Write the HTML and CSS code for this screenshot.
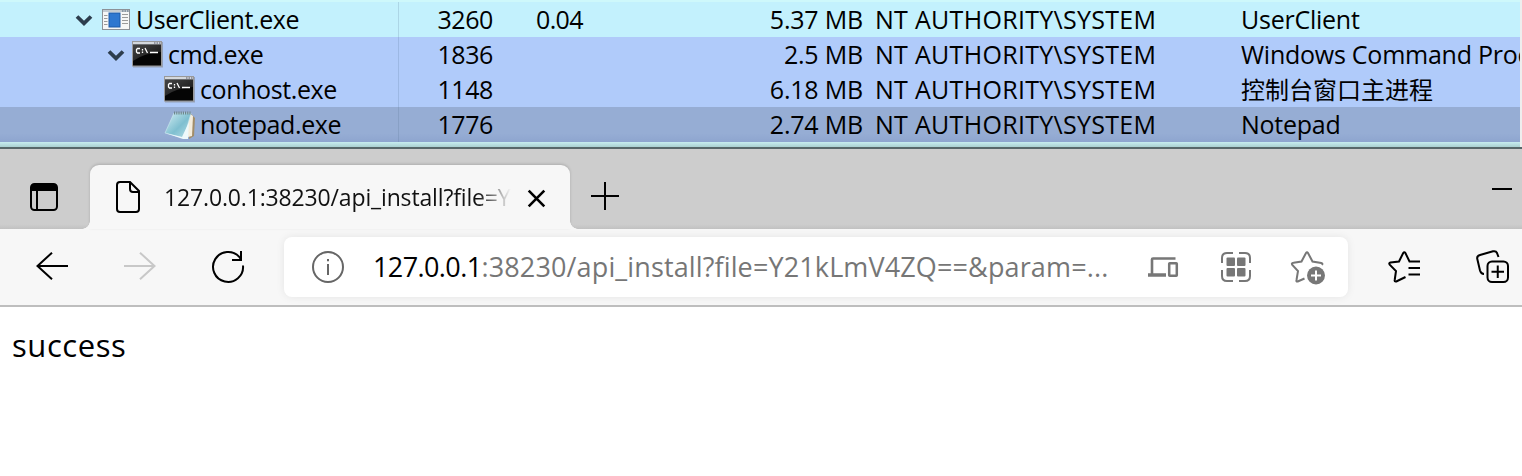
FILE: index.html
```
<!DOCTYPE html>
<html lang="zh-CN">
<head>
<meta charset="utf-8">
<title>127.0.0.1:38230/api_install</title>
<link rel="stylesheet" href="styles.css">
</head>
<body>
<svg class="defs" width="0" height="0" aria-hidden="true">
  <defs>
    <linearGradient id="gloss" x1="0" y1="0" x2="1" y2="1"><stop offset="0" stop-color="#444"/><stop offset="1" stop-color="#111"/></linearGradient>
    <linearGradient id="page" x1="0" y1="0" x2="1" y2="1"><stop offset="0" stop-color="#d3eef2"/><stop offset=".55" stop-color="#7fbfd0"/><stop offset="1" stop-color="#b9e0e8"/></linearGradient>
    <symbol id="console" viewBox="0 0 32 27">
      <rect x="1" y="1" width="30" height="25.500" fill="#777" opacity=".5"/>
      <rect x=".5" y=".5" width="29" height="24.500" fill="#050505" stroke="#999"/>
      <path d="M1 4H29V11Q12 12 1 20Z" fill="url(#gloss)"/>
      <rect x="1" y="1" width="28" height="2.500" fill="#d4d8dd"/>
      <path d="M22 2h1.500M24.500 2h1.500M27 2h1.500" stroke="#556" stroke-width="1"/>
      <path d="M8 7.500H5.500L4.500 8.500V11L5.500 12H8M10.500 8v1.500M10.500 10.500v1.500M13 7l2.500 5M18 11.500h8" fill="none" stroke="#fff" stroke-width="1.300"/>
    </symbol>
    <symbol id="chevron" viewBox="0 0 18 12"><path d="M2 2.500 9 9.300 16 2.500" fill="none" stroke="#2d3d4d" stroke-width="3.800"/></symbol>
  </defs>
</svg>
<section class="processes">
  <div class="row own">
    <div class="name level1"><svg class="chevron"><use href="#chevron"/></svg>
      <svg class="app-icon" viewBox="0 0 28 21"><rect x=".5" y=".5" width="27" height="20" fill="#f6f6f6" stroke="#8c9197"/><path d="M1 2h26" stroke="#c3cbd2" stroke-width="2"/><path d="M20 2h1.500M22.500 2h1.500M25 2h1.500" stroke="#567"/><rect x="7" y="4" width="11" height="14" fill="#2e77d0" stroke="#1c5aa8"/><path d="M2 6.500h3.500M2 9.500h3.500M2 12.500h3.500M2 15.500h3.500M20 5.500h6M20 8.500h6M20 11.500h6M20 14.500h6" stroke="#9a9a9a"/></svg>
      <span>UserClient.exe</span></div>
    <div class="pid">3260</div><div class="cpu">0.04</div><div class="mem">5.37 MB</div><div class="user">NT AUTHORITY\SYSTEM</div><div class="desc">UserClient</div>
  </div>
  <div class="row system">
    <div class="name level2"><svg class="chevron"><use href="#chevron"/></svg><svg class="console"><use href="#console"/></svg><span>cmd.exe</span></div>
    <div class="pid">1836</div><div class="cpu"></div><div class="mem">2.5 MB</div><div class="user">NT AUTHORITY\SYSTEM</div><div class="desc">Windows Command Proc</div>
  </div>
  <div class="row system">
    <div class="name level3"><svg class="console"><use href="#console"/></svg><span>conhost.exe</span></div>
    <div class="pid">1148</div><div class="cpu"></div><div class="mem">6.18 MB</div><div class="user">NT AUTHORITY\SYSTEM</div><div class="desc cjk">控制台窗口主进程</div>
  </div>
  <div class="row selected">
    <div class="name level3"><svg class="notepad" viewBox="0 0 32 30"><path d="M27 4 31 8 30 26 25 29Z" fill="#a28d68"/><path d="M25 3 29 6 28 26 20 28Z" fill="#f4eddd"/><path d="M10 3H27L20 28 1 23Z" fill="url(#page)" stroke="#cceaf0" stroke-width=".6"/><path d="M1 23 18 27 25 12 24 29 19 29Z" fill="#eef9fb"/><path d="M10 3H27" stroke="#6e868b" stroke-width="3" stroke-dasharray="1.200 1"/></svg><span>notepad.exe</span></div>
    <div class="pid">1776</div><div class="cpu"></div><div class="mem">2.74 MB</div><div class="user">NT AUTHORITY\SYSTEM</div><div class="desc">Notepad</div>
  </div>
  <div class="next-row"></div>
</section>
<main class="browser">
  <header class="tabs">
    <svg class="tab-menu" viewBox="0 0 28 28"><rect x="1" y="1" width="26" height="26" rx="3.500" fill="none" stroke="#000" stroke-width="2"/><path d="M1 8V4.500Q1 1 4.500 1H23.500Q27 1 27 4.500V8Z"/><path d="M7 8V27" stroke="#000" stroke-width="2"/></svg>
    <div class="tab">
      <svg class="doc" viewBox="0 0 24 32"><path d="M4 1H14L23 10V28Q23 31 20 31H4Q1 31 1 28V4Q1 1 4 1ZM14 1V8Q14 11 17 11H23" fill="none" stroke="#000" stroke-width="2"/></svg>
      <span class="title">127.0.0.1:38230/api_install?file=Y</span>
      <svg class="close" viewBox="0 0 17 17"><path d="M.7.7 16.300 16.300M16.300.7.700 16.300" stroke="#000" stroke-width="2.600"/></svg>
    </div>
    <svg class="plus" viewBox="0 0 28 28"><path d="M14 0V28M0 14H28" stroke="#000" stroke-width="2"/></svg>
    <svg class="minimize" viewBox="0 0 20 2"><path d="M0 1H20" stroke="#000" stroke-width="2"/></svg>
  </header>
  <nav class="toolbar">
    <svg class="back" viewBox="0 0 32 28"><path d="M32 14H1M16 .7 1.500 14 16 27.300" fill="none" stroke="#000" stroke-width="2"/></svg>
    <svg class="forward" viewBox="0 0 32 28"><path d="M0 14H31M16 .7 30.500 14 16 27.300" fill="none" stroke="#c8c8c8" stroke-width="2"/></svg>
    <svg class="reload" viewBox="0 0 32 32"><path d="M31 14.500A15 15 0 1 1 27.500 6.200L29 8.500M29 0V9H20" fill="none" stroke="#000" stroke-width="2"/></svg>
    <div class="address">
      <svg class="info" viewBox="0 0 32 32"><circle cx="16" cy="16" r="15" fill="none" stroke="#666" stroke-width="2"/><path d="M16 13V24M16 8V10.300" stroke="#666" stroke-width="2"/></svg>
      <span class="url"><b>127.0.0.1</b>:38230/api_install?file=Y21kLmV4ZQ==&amp;param=...</span>
      <svg class="devices" viewBox="0 0 30 20"><path d="M4 17V2.500Q4 1.500 5 1.500H27.500" fill="none" stroke="#777" stroke-width="2.600"/><path d="M0 18H18" stroke="#777" stroke-width="3.500"/><rect x="21.200" y="6.200" width="7.600" height="12.600" rx=".5" fill="none" stroke="#777" stroke-width="2.500"/></svg>
      <svg class="qr" viewBox="0 0 30 30"><path d="M1 11V6Q1 1 6 1H12M18 1H24Q29 1 29 6V11M29 18V24Q29 29 24 29H18M12 29H6Q1 29 1 24V18" fill="none" stroke="#777" stroke-width="2"/><g fill="#777"><rect x="5.500" y="5.500" width="8.500" height="8.500" rx="1"/><rect x="16" y="5.500" width="8.500" height="8.500" rx="1"/><rect x="5.500" y="16" width="8.500" height="8.500" rx="1"/><rect x="16" y="16" width="8.500" height="8.500" rx="1"/></g></svg>
      <svg class="favorite" viewBox="0 0 35 34"><path d="M13.500 27.500 6.700 30.500Q5 31 5.500 29L7 20 1.300 14Q0 12 2.500 11.700L10.500 10.500 15 2Q16 .5 17 2L21.500 10.500 30.300 12Q32 12.300 31 14" fill="none" stroke="#777" stroke-width="2"/><circle cx="25" cy="24.500" r="9" fill="#777"/><path d="M25 19.500V29.500M20 24.500H30" stroke="#fff" stroke-width="2"/></svg>
    </div>
    <svg class="favorites" viewBox="0 0 34 32"><path d="M17.500 26 8.300 30.500Q6.300 31 6.700 29L8 20 1.700 13.700Q.5 12 2.500 11.500L11 10.500 15.200 2Q16.300 .3 17.400 2L21.500 10.500H32M20.500 17H32M20.500 23.500H32" fill="none" stroke="#000" stroke-width="2"/></svg>
    <svg class="collections" viewBox="0 0 34 34"><path d="M8 24Q5 24 4 20.500L1.300 9Q.6 6 4 5L17 1.300Q20 .6 21 3L22.500 7" fill="none" stroke="#000" stroke-width="2"/><rect x="11.500" y="11.500" width="20.500" height="20.500" rx="4.500" fill="none" stroke="#000" stroke-width="2"/><path d="M21.750 15.500V28M15.500 21.750H28" stroke="#000" stroke-width="2"/></svg>
  </nav>
  <article class="content">success</article>
</main>
</body>
</html>
```
FILE: styles.css
```
* { box-sizing: border-box; }
body { margin: 0; width: 1522px; height: 476px; overflow: hidden; background: #fff; color: #000; font-family: "Open Sans", "Noto Sans", "Noto Sans CJK SC", sans-serif; }
svg { display: block; flex: none; overflow: visible; }
.defs { position: absolute; }
.processes { height: 147px; padding-top: 2px; width: 1522px; border-right: 2px solid #eee; background: #cef8fb; }
.row { display: grid; grid-template-columns: 399px 94px 90px 280px 378px 279px; height: 35px; line-height: 35px; font-size: 25px; letter-spacing: -.6px; white-space: nowrap; }
.own { background: #c3f1fd; }
.system { background: #b0cbfa; }
.selected { background: linear-gradient(#96add4 75%, #8ea5cf); }
.name { display: flex; align-items: center; border-right: 1px solid rgba(80, 110, 140, .2); letter-spacing: -.4px; }
.level1 { padding-left: 75px; }
.level2 { padding-left: 107px; }
.level3 { padding-left: 164px; }
.chevron { width: 18px; height: 12px; }
.app-icon { width: 28px; height: 21px; margin: 0 6px 0 9px; }
.console { width: 32px; height: 27px; margin-right: 4px; }
.level2 .console { margin-left: 7px; }
.notepad { width: 32px; height: 30px; margin-right: 4px; }
.pid, .cpu, .mem { text-align: right; }
.pid { letter-spacing: -.4px; }
.mem { letter-spacing: -.2px; }
.user { padding-left: 12px; letter-spacing: .3px; }
.desc { overflow: hidden; letter-spacing: -.25px; }
.cjk { font-family: "Noto Sans CJK SC", sans-serif; font-size: 24px; letter-spacing: 0; line-height: 34px; }
.next-row { height: 5px; background: linear-gradient(#c7edf0, #a9d0d1); }
.browser { border-top: 2px solid #57676a; }
.tabs { display: flex; height: 80px; padding: 16px 0 0 30px; background: linear-gradient(#cdcdcd 94%, #c1c1c1); }
.tab-menu { width: 28px; height: 28px; margin-top: 18px; }
.tab { position: relative; display: flex; width: 480px; height: 64px; margin-left: 32px; padding-left: 26px; border-radius: 9px 9px 0 0; background: #f7f7f7; box-shadow: 0 -1px 3px rgba(0, 0, 0, .16); }
.tab::before, .tab::after { content: ""; position: absolute; bottom: 0; width: 8px; height: 8px; }
.tab::before { left: -8px; background: radial-gradient(circle at 0 0, transparent 7.500px, #f7f7f7 8px); }
.tab::after { right: -8px; background: radial-gradient(circle at 100% 0, transparent 7.500px, #f7f7f7 8px); }
.doc { width: 24px; height: 32px; margin-top: 16px; }
.title { width: 349px; margin-left: 24px; white-space: nowrap; font-size: 23px; line-height: 64px; letter-spacing: -.15px; background: linear-gradient(90deg, #111 90%, #eee 99%); -webkit-background-clip: text; background-clip: text; color: transparent; }
.close { width: 17px; height: 17px; margin: 25px 0 0 15px; }
.plus { width: 28px; height: 28px; margin: 17px 0 0 21px; }
.minimize { width: 20px; height: 2px; margin: 23px 10px 0 auto; }
.toolbar { display: flex; height: 78px; padding: 8px 0 0 36px; background: #f7f7f7; border-bottom: 2px solid #bebebe; }
.back, .forward { width: 32px; height: 28px; margin-top: 15px; }
.forward { margin-left: 56px; }
.reload { width: 32px; height: 32px; margin: 14px 0 0 56px; }
.address { display: flex; width: 1064px; height: 60px; margin-left: 40px; padding-left: 28px; border-radius: 8px; background: #fff; box-shadow: 0 0 9px rgba(0, 0, 0, .08); }
.info { width: 32px; height: 32px; margin-top: 14px; }
.url { width: 740px; margin-left: 29px; white-space: nowrap; font-size: 27px; line-height: 60px; letter-spacing: .13px; color: #767676; }
.url b { font-weight: 400; letter-spacing: -.6px; color: #000; }
.devices { width: 30px; height: 20px; margin: 20px 0 0 35px; }
.qr { width: 30px; height: 30px; margin: 15px 0 0 43px; }
.favorite { width: 35px; height: 34px; margin: 14px 0 0 40px; }
.favorites { width: 34px; height: 32px; margin: 14px 0 0 40px; }
.collections { width: 34px; height: 34px; margin: 13px 0 0 54px; }
.content { padding-left: 12px; font-size: 31px; line-height: 76px; letter-spacing: .55px; }
```
